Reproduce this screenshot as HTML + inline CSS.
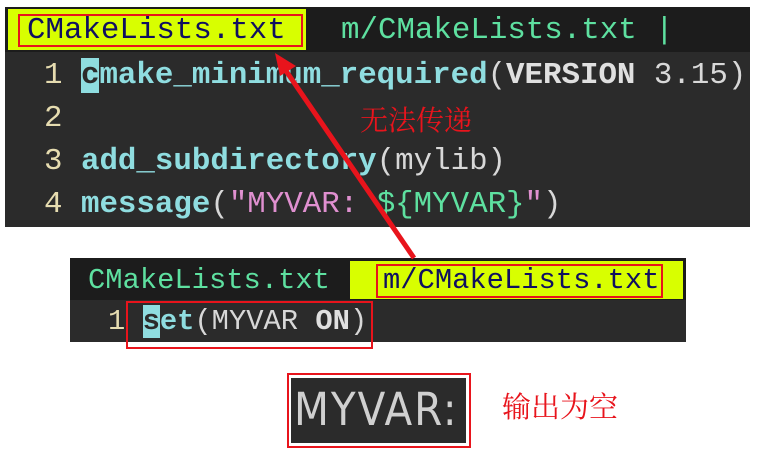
<!DOCTYPE html>
<html><head><meta charset="utf-8"><style>
body{margin:0;width:758px;height:453px;background:#fff;position:relative;overflow:hidden;font-family:"Liberation Mono",monospace}
.a{position:absolute;white-space:pre}
.f{color:#8fdde0;font-weight:bold}
.n{color:#e6dcb0}
.w{color:#d8d8d8}
.cn{color:#e0e0e0;font-weight:bold}
.cur{color:#2b2b2b;background:#8fdde0}
.cjk{font-family:"Liberation Serif","Noto Serif CJK SC",serif;color:#e8141c}
</style></head><body>
<div class="a" style="left:5px;top:7px;width:745px;height:45px;background:#1c1c1c"></div>
<div class="a" style="left:5px;top:52px;width:745px;height:175px;background:#2b2b2b"></div>
<div class="a" style="left:8px;top:9px;width:298px;height:41px;background:#d8ff00"></div>
<div class="a" style="left:18px;top:14px;width:285px;height:33px;border:2px solid #e8141c;box-sizing:border-box"></div>
<div class="a" style="left:27px;top:13px;font-size:30.8px;line-height:36px;color:#101060">CMakeLists.txt</div>
<div class="a" style="left:341px;top:13px;font-size:30.8px;line-height:36px;color:#5ee0a0">m/CMakeLists.txt |</div>
<div class="a" style="left:44px;top:54px;font-size:30.8px;line-height:43px"><span class="n">1</span> <span class="f"><span class="cur">c</span>make_minimum_required</span><span class="w">(</span><span class="cn">VERSION</span><span class="w"> 3.15)</span>
<span class="n">2</span>
<span class="n">3</span> <span class="f">add_subdirectory</span><span class="w">(mylib)</span>
<span class="n">4</span> <span class="f">message</span><span class="w">(</span><span style="color:#e090d0">"MYVAR: </span><span style="color:#5ee0a0">${MYVAR}</span><span style="color:#e090d0">"</span><span class="w">)</span></div>
<div class="a cjk" style="left:360px;top:104px;font-size:28px;line-height:36px">无法传递</div>
<div class="a" style="left:70px;top:258px;width:616px;height:42px;background:#1c1c1c"></div>
<div class="a" style="left:70px;top:300px;width:616px;height:42px;background:#2b2b2b"></div>
<div class="a" style="left:350px;top:261px;width:333px;height:38px;background:#d8ff00"></div>
<div class="a" style="left:376px;top:264px;width:287px;height:34px;border:2px solid #e8141c;box-sizing:border-box"></div>
<div class="a" style="left:88px;top:264px;font-size:28.8px;line-height:34px;color:#5ee0a0">CMakeLists.txt</div>
<div class="a" style="left:383px;top:264px;font-size:28.8px;line-height:34px;color:#101060">m/CMakeLists.txt</div>
<div class="a" style="left:108px;top:304px;font-size:28.8px;line-height:36px"><span class="n">1</span> <span class="f"><span class="cur">s</span>et</span><span class="w">(MYVAR </span><span class="cn">ON</span><span class="w">)</span></div>
<div class="a" style="left:126px;top:301px;width:247px;height:48px;border:2px solid #e8141c;box-sizing:border-box"></div>
<div class="a" style="left:287px;top:373px;width:184px;height:75px;border:2px solid #e8141c;box-sizing:border-box;background:#fff"></div>
<div class="a" style="left:291px;top:378px;width:175px;height:65px;background:#2b2b2b"></div>
<div class="a" style="left:294px;top:385px;font-family:'DejaVu Sans Condensed','DejaVu Sans',sans-serif;font-stretch:condensed;font-size:45px;line-height:50px;letter-spacing:2px;color:#d0d0d0">MYVAR:</div>
<div class="a cjk" style="left:502px;top:390px;font-size:29px;line-height:36px">输出为空</div>
<svg class="a" style="left:0;top:0" width="758" height="453"><line x1="414" y1="258" x2="284" y2="68" stroke="#e8141c" stroke-width="5"/><polygon points="275,53 296,66 280,76" fill="#e8141c"/></svg>
</body></html>
